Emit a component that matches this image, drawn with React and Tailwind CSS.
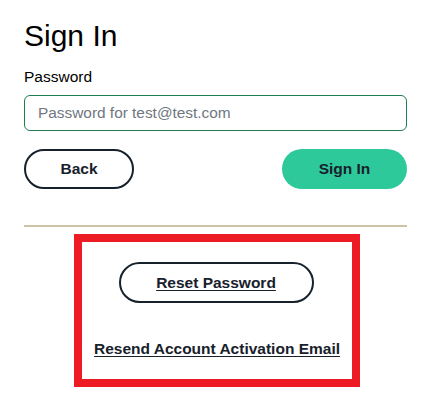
export default function App() {
  return (
    <div className="w-[432px] h-[420px] bg-white px-6 font-['Liberation_Sans',Arial,sans-serif] text-black">
      <h1 className="pt-[18px] text-[30px] leading-[36px] font-normal">Sign In</h1>
      <label className="mt-[13px] block text-[15.5px] leading-[20px]">Password</label>
      <input
        type="password"
        placeholder="Password for test@test.com"
        className="mt-[8px] block h-[36px] w-[383px] rounded-[6px] border border-[#1f7d50] px-[13px] text-[15.4px] placeholder:text-[#6f7780] outline-none"
      />
      <div className="mt-[18px] flex w-[383px] items-center justify-between">
        <button className="h-[40px] w-[110px] rounded-full border-2 border-[#17212b] text-[15.5px] font-bold text-[#17212b]">
          Back
        </button>
        <button className="h-[40px] w-[125px] rounded-full bg-[#2ec99a] text-[15.5px] font-bold text-[#17212b]">
          Sign In
        </button>
      </div>
      <div className="mt-[36px] h-[2px] w-[383px] bg-[#cbc3a3]" />
      <div className="ml-[50px] mt-[7px] flex w-[286px] flex-col items-center border-[8px] border-[#ed1c24] pt-[20px] pb-[20px]">
        <button className="mr-[2px] h-[41px] w-[195px] rounded-full border-2 border-[#17212b] text-[15.5px] font-bold text-[#17212b] underline underline-offset-2">
          Reset Password
        </button>
        <a href="#" className="mt-[36px] text-[15.5px] leading-[20px] font-bold text-[#17212b] underline underline-offset-2">
          Resend Account Activation Email
        </a>
      </div>
    </div>
  );
}
